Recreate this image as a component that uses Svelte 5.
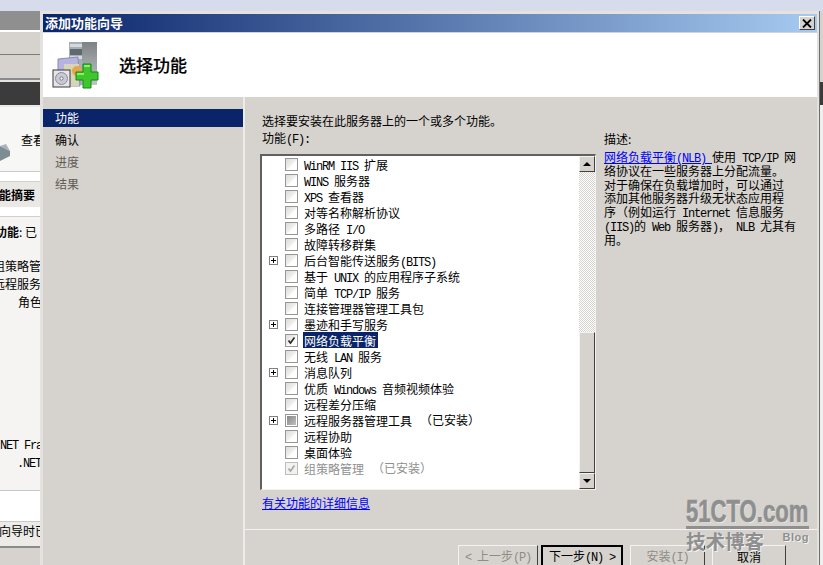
<script>
  const zh = '"Noto Sans CJK SC", sans-serif';
  const installed = '\uFF08已安装\uFF09';

  const features = [
    { label: 'WinRM IIS 扩展' },
    { label: 'WINS 服务器' },
    { label: 'XPS 查看器' },
    { label: '对等名称解析协议' },
    { label: '多路径 I/O' },
    { label: '故障转移群集' },
    { label: '后台智能传送服务(BITS)', expand: true },
    { label: '基于 UNIX 的应用程序子系统' },
    { label: '简单 TCP/IP 服务' },
    { label: '连接管理器管理工具包' },
    { label: '墨迹和手写服务', expand: true },
    { label: '网络负载平衡', state: 'checked', selected: true },
    { label: '无线 LAN 服务' },
    { label: '消息队列', expand: true },
    { label: '优质 Windows 音频视频体验' },
    { label: '远程差分压缩' },
    { label: '远程服务器管理工具', note: installed, expand: true, state: 'partial' },
    { label: '远程协助' },
    { label: '桌面体验' },
    { label: '组策略管理', note: installed, state: 'locked' }
  ];

  const steps = [
    { label: '功能', cls: 'active' },
    { label: '确认', cls: '' },
    { label: '进度', cls: 'dim' },
    { label: '结果', cls: 'dim' }
  ];

  const description = [
    '络协议在一些服务器上分配流量。',
    '对于确保在负载增加时\uFF0C可以通过',
    '添加其他服务器升级无状态应用程',
    '序\uFF08例如运行 Internet 信息服务',
    '(IIS)的 Web 服务器)\uFF0C NLB 尤其有',
    '用。'
  ];

  // latin runs are 6px wide in the original, cjk 12px
  function runs(text) {
    return text.split(/([\x20-\x7e]+)/).filter(Boolean).map((t) => ({
      t,
      latin: /^[\x20-\x7e]+$/.test(t)
    }));
  }
</script>

{#snippet mixed(text)}{#each runs(text) as r}{#if r.latin}<span class="latin">{r.t}</span>{:else}{r.t}{/if}{/each}{/snippet}

<div class="screen" style="--zh: {zh}">
  <div class="desktop-band"></div>
  <div class="row">
    <div class="behind">
      <div class="b-head"></div>
      <div class="b-tab"></div>
      <div class="b-tab second"></div>
      <div class="b-dark"></div>
      <div class="b-view">
        <svg class="b-icon" width="11" height="20" viewBox="0 0 11 20">
          <path d="M0 4 L10 9 L10 14 L0 19Z" fill="#7e8c94" />
          <path d="M0 4 L6 2 L10 9Z" fill="#a9b4ba" />
        </svg>
        <span class="b-look">查看</span>
      </div>
      <div class="b-white">
        <div class="b-pad"></div>
        <div class="b-title">能摘要</div>
        <div class="b-pad"></div>
        <div class="b-line bold"><b>功能</b>: 已</div>
        <div class="b-gap"></div>
        <div class="b-line far">组策略管</div>
        <div class="b-line far">远程服务</div>
        <div class="b-line indent">角色</div>
        <div class="b-spacer"></div>
        <div class="b-line mono"><span class="latin">NET Fra</span></div>
        <div class="b-line mono indent"><span class="latin">.NET</span></div>
      </div>
      <div class="b-blank"></div>
      <div class="b-foot">向导时已</div>
      <div class="b-end"></div>
    </div>

    <div class="dialog">
      <div class="titlebar">
        <span>添加功能向导</span>
        <button class="close" aria-label="关闭">
          <svg width="10" height="9" viewBox="0 0 10 9"><path d="M1 0.5 L9 8.5 M9 0.5 L1 8.5" stroke="#000" stroke-width="1.8" /></svg>
        </button>
      </div>
      <div class="banner">
        <svg class="logo" width="50" height="50" viewBox="0 0 50 50">
          <defs>
            <linearGradient id="tower" x1="0" x2="0" y1="0" y2="1">
              <stop offset="0" stop-color="#7d8385" />
              <stop offset="1" stop-color="#c2c5c4" />
            </linearGradient>
          </defs>
          <rect x="18" y="2" width="28" height="43" fill="url(#tower)" />
          <rect x="18" y="2" width="13" height="43" fill="#a8afb2" />
          <rect x="19" y="4" width="12" height="3" fill="#d5dadd" />
          <rect x="19" y="9" width="12" height="6" fill="#5f6a70" />
          <rect x="19" y="16" width="12" height="3" fill="#d5dadd" />
          <path d="M7 19 L27 17 L29 46 L7 46Z" fill="#b6b4de" stroke="#8c88b8" />
          <path d="M13 24 H28 V46 H13Z" fill="#d8d4b8" />
          <circle cx="26" cy="31" r="5" fill="#e4a64a" />
          <rect x="2" y="30" width="17" height="17" fill="#e6e6ea" stroke="#3b3b3b" />
          <circle cx="10.5" cy="38.5" r="6" fill="#c9c9d6" stroke="#8b8b9a" />
          <circle cx="10.5" cy="38.5" r="1.6" fill="#fff" stroke="#777" />
          <path d="M32 24 H40 V32 H47 V40 H40 V48 H32 V40 H25 V32 H32Z" fill="#3fc62c" stroke="#118a12" />
          <path d="M33 25 H39 V27 H33 Z M26 33 H33 V35 H26Z" fill="#8fee72" />
        </svg>
        <h1>选择功能</h1>
      </div>
      <div class="body">
        <nav class="steps">
          {#each steps as s}
            <div class="step {s.cls}">{s.label}</div>
          {/each}
        </nav>
        <main class="content">
          <div class="columns">
            <section class="left">
              <p class="intro">选择要安装在此服务器上的一个或多个功能。</p>
              <p class="field">{@render mixed('功能(F):')}</p>
              <div class="listbox">
                <ul>
                  {#each features as f}
                    <li class:locked={f.state === 'locked'}>
                      <span class="expander">
                        {#if f.expand}
                          <svg width="9" height="9" viewBox="0 0 9 9"><rect x="0.5" y="0.5" width="8" height="8" fill="#fff" stroke="#808080" /><path d="M2 4.5 H7 M4.5 2 V7" stroke="#000" /></svg>
                        {/if}
                      </span>
                      <span class="check {f.state || ''}">
                        {#if f.state === 'checked' || f.state === 'locked'}
                          <svg width="11" height="11" viewBox="0 0 11 11"><path d="M2.5 5.5 L4.5 8 L8.5 2.5" fill="none" stroke="currentColor" stroke-width="1.7" /></svg>
                        {/if}
                      </span>
                      <span class="label" class:selected={f.selected}>{@render mixed(f.label)}</span>
                      {#if f.note}<span class="note">{f.note}</span>{/if}
                    </li>
                  {/each}
                </ul>
                <div class="scrollbar">
                  <button class="arrow" aria-label="向上"><i class="up"></i></button>
                  <div class="track"><div class="thumb"></div></div>
                  <button class="arrow" aria-label="向下"><i class="down"></i></button>
                </div>
              </div>
              <a class="more" href="#more">有关功能的详细信息</a>
            </section>
            <aside class="desc">
              <p class="desc-head">描述:</p>
              <div class="desc-line"><a href="#nlb">{@render mixed('网络负载平衡(NLB) ')}</a>{@render mixed('使用 TCP/IP 网')}</div>
              {#each description as line}
                <div class="desc-line">{@render mixed(line)}</div>
              {/each}
            </aside>
          </div>
          <footer class="buttons">
            <button class="btn" disabled>{@render mixed('< 上一步(P)')}</button>
            <button class="btn primary">{@render mixed('下一步(N) >')}</button>
            <button class="btn install" disabled>{@render mixed('安装(I)')}</button>
            <button class="btn cancel">取消</button>
          </footer>
        </main>
      </div>
    </div>

    <div class="behind-right">
      <div class="r-a"></div>
      <div class="r-dark"></div>
      <div class="r-b"></div>
    </div>
  </div>

  <div class="watermark">
    <div class="wm-main">51CTO.com</div>
    <div class="wm-rule"></div>
    <div class="wm-sub"><span>技术博客</span><em>Blog</em></div>
  </div>
</div>

<style>
  :global(body) {
    margin: 0;
    background: #d6d3ce;
  }
  .screen {
    position: relative;
    width: 823px;
    height: 565px;
    overflow: hidden;
    display: flex;
    flex-direction: column;
    font: 12px/16px var(--zh);
    color: #000;
    background: #d6d3ce;
  }
  /* 12px courier squeezed to the 6px advance of the bitmap font */
  .latin {
    font-family: "Liberation Mono", monospace;
    font-size: 12px;
    letter-spacing: -1.2px;
    white-space: pre;
  }
  p { margin: 0; }

  .desktop-band {
    height: 11px;
    flex: none;
    background: #d7dcec;
  }
  .row {
    flex: 1;
    display: flex;
    min-height: 0;
  }

  /* window showing behind the wizard */
  .behind {
    width: 40px;
    flex: none;
    display: flex;
    flex-direction: column;
    overflow: hidden;
    white-space: nowrap;
    background: #e4e2de;
  }
  .b-head { height: 19px; flex: none; background: #8f8f8f; border-bottom: 2px solid #fff; }
  .b-tab { height: 22px; flex: none; background: #d6d3ce; border-bottom: 1px solid #7c7c7c; }
  .b-tab.second { height: 23px; border-bottom: 2px solid #8b8b8b; margin-bottom: 2px; }
  .b-dark { height: 23px; flex: none; background: #3b3b3b; border-bottom: 2px solid #e9e9e9; }
  .b-view {
    height: 64px;
    flex: none;
    display: flex;
    align-items: center;
    background: #f7f7f6;
    border-bottom: 1px solid #c8c8c8;
    position: relative;
  }
  .b-icon { position: absolute; left: 0; top: 35px; }
  .b-look { margin-left: 21px; margin-top: 2px; }
  .b-white {
    height: 319px;
    flex: none;
    background: #f5f4f2;
    border-bottom: 1px solid #c8c8c8;
    box-sizing: border-box;
  }
  .b-pad {
    height: 9px;
    background: #fff;
    border-bottom: 1px solid #d0d0d0;
  }
  .b-title {
    height: 25px;
    line-height: 25px;
    margin-left: -1px;
    font-weight: 700;
    background: #e9e8e5;
  }
  .b-line { height: 18px; line-height: 18px; }
  .b-line.bold { margin: 6px 0 0 -5px; }
  .b-line.bold b { font-weight: 700; }
  .b-gap { height: 16px; }
  .b-line.far { margin-left: -7px; }
  .b-line.indent { margin-left: 18px; }
  .b-line.mono { margin-left: 0; }
  .b-line.mono.indent { margin-left: 17px; }
  .b-spacer { height: 124px; }
  .b-blank { height: 30px; flex: none; background: #fff; border-bottom: 1px solid #c8c8c8; }
  .b-foot { height: 24px; flex: none; line-height: 18px; margin-left: -1px; background: #ecebe8; }
  .b-end { flex: 1; background: #d6d3ce; border-top: 2px solid #8b8b8b; }

  .behind-right {
    width: 3px;
    flex: none;
    display: flex;
    flex-direction: column;
    background: #d6d3ce;
    border-left: 1px solid #6e6e6e;
  }
  .r-a { height: 71px; }
  .r-dark { height: 23px; background: #3b3b3b; }
  .r-b { flex: 1; background: #efefef; }

  /* wizard */
  .dialog {
    flex: 1;
    min-width: 0;
    display: flex;
    flex-direction: column;
    box-sizing: border-box;
    border: solid #e4e2de;
    border-width: 3px 2px 0 3px;
    background: #d6d3ce;
  }
  .titlebar {
    height: 18px;
    flex: none;
    padding: 0 2px;
    display: flex;
    align-items: center;
    justify-content: space-between;
    color: #fff;
    font-size: 13px;
    font-weight: 700;
    background: linear-gradient(90deg, #0a246a, #a6caf0);
    border-bottom: 1px solid #d6d3ce;
  }
  .close {
    width: 16px;
    height: 14px;
    padding: 0;
    display: flex;
    align-items: center;
    justify-content: center;
    background: #d6d3ce;
    border: 1px solid;
    border-color: #fff #404040 #404040 #fff;
  }
  .banner {
    height: 64px;
    flex: none;
    display: flex;
    align-items: center;
    background: #fff;
  }
  .logo { margin: 0 0 0 8px; }
  .banner h1 {
    margin: 0 0 0 18px;
    font-size: 17px;
    line-height: 20px;
    font-weight: 500;
    -webkit-text-stroke: 0.2px #000;
  }

  .body {
    flex: 1;
    min-height: 0;
    display: flex;
  }
  .steps {
    width: 200px;
    flex: none;
    box-sizing: border-box;
    padding-top: 12px;
  }
  .step {
    height: 22px;
    line-height: 20px;
    padding-left: 12px;
    color: #000;
  }
  .step.active {
    height: 18px;
    margin-bottom: 3px;
    line-height: 18px;
    background: #0a246a;
    color: #fff;
  }
  .step.dim { color: #5f5c55; }

  .content {
    flex: 1;
    min-width: 0;
    display: flex;
    flex-direction: column;
    border-left: 2px solid #eeece8;
  }
  .columns {
    flex: 1;
    min-height: 0;
    display: flex;
    padding: 15px 0 0 15px;
    border-bottom: 1px solid #f4f3f1;
  }
  .left { width: 336px; flex: none; }
  .intro { height: 18px; line-height: 17px; margin-left: 2px; }
  .field { height: 16px; line-height: 15px; margin-left: 2px; }
  .listbox {
    box-sizing: border-box;
    height: 336px;
    margin-top: 8px;
    display: flex;
    background: #fff;
    border: solid;
    border-width: 2px 1px 1px 2px;
    border-color: #606060 #f2f1ef #f2f1ef #606060;
  }
  .listbox ul {
    flex: 1;
    margin: 0;
    padding: 0;
    list-style: none;
  }
  .listbox li {
    height: 16px;
    display: flex;
    align-items: center;
    white-space: nowrap;
  }
  .expander {
    width: 9px;
    height: 9px;
    margin-left: 7px;
    display: flex;
  }
  .check {
    box-sizing: border-box;
    width: 13px;
    height: 13px;
    margin-left: 7px;
    display: flex;
    align-items: center;
    justify-content: center;
    border: 1px solid #969696;
    color: #2c2c2c;
    background: linear-gradient(135deg, #dcdcd8, #eeeeeb 45%, #fff 60%);
  }
  .check.partial {
    background: linear-gradient(135deg, #7e7e7e, #c8c8c8);
    box-shadow: inset 0 0 0 1px #fff;
  }
  .check.locked {
    border-color: #bdbdbd;
    color: #a8a8a8;
    background: #f2f2f0;
  }
  .label {
    margin-left: 5px;
    padding: 0 1px;
    height: 16px;
    line-height: 18px;
  }
  .label.selected {
    background: #0a246a;
    color: #fff;
    padding: 0 2px 0 1px;
  }
  .note { margin-left: 7px; line-height: 18px; }
  li.locked { color: #8f8f8f; }

  .scrollbar {
    width: 16px;
    flex: none;
    display: flex;
    flex-direction: column;
  }
  .arrow {
    flex: none;
    width: 16px;
    height: 16px;
    padding: 0;
    display: flex;
    align-items: center;
    justify-content: center;
    background: #d6d3ce;
    border: 1px solid;
    border-color: #f4f3f1 #404040 #404040 #f4f3f1;
  }
  .arrow i {
    width: 0;
    height: 0;
    border: 4px solid transparent;
  }
  .arrow i.up { border-bottom-color: #000; border-top-width: 0; }
  .arrow i.down { border-top-color: #000; border-bottom-width: 0; }
  .track {
    flex: 1;
    display: flex;
    flex-direction: column;
    justify-content: flex-end;
    background: repeating-conic-gradient(#d6d3ce 0 25%, #fff 0 50%) 0 0 / 2px 2px;
  }
  .thumb {
    height: 141px;
    box-sizing: border-box;
    background: #d6d3ce;
    border: 1px solid;
    border-color: #f4f3f1 #404040 #404040 #f4f3f1;
  }
  .more {
    display: inline-block;
    margin: 5px 0 0 2px;
    color: #0000ff;
    text-decoration: underline;
  }

  .desc {
    flex: 1;
    min-width: 0;
    margin-left: 8px;
    padding-top: 19px;
    white-space: nowrap;
  }
  .desc-head { height: 19px; line-height: 16px; }
  .desc-line { height: 13.83px; line-height: 14px; }
  .desc a { color: #0000ff; text-decoration: underline; }

  .buttons {
    height: 35px;
    flex: none;
    box-sizing: border-box;
    padding: 15px 0 0 213px;
    display: flex;
  }
  .btn {
    box-sizing: border-box;
    height: 24px;
    padding: 0 0 1px;
    font: 12px/16px var(--zh);
    color: #000;
    background: #d6d3ce;
    border: 1px solid;
    border-color: #f4f3f1 #404040 #404040 #f4f3f1;
    width: 80px;
    margin-right: 3px;
    white-space: nowrap;
  }
  .btn:disabled { color: #8f8c85; }
  .btn.primary {
    width: 82px;
    border: 2px solid #000;
    margin-right: 7px;
  }
  .btn.install { width: 75px; margin-right: 7px; }
  .btn.cancel { width: 74px; margin-right: 0; }

  /* site watermark stamped on the screenshot */
  .watermark {
    position: absolute;
    left: 686px;
    top: 497px;
    width: 123px;
    color: #8f8f8f;
    pointer-events: none;
  }
  .wm-main {
    height: 29px;
    font: 700 32px/29px "Liberation Sans", sans-serif;
    -webkit-text-stroke: 0.7px #8f8f8f;
    text-shadow: 1px 1px 0 #f2f2f2;
    transform: scaleX(0.69);
    transform-origin: left center;
    white-space: nowrap;
  }
  .wm-rule { height: 3px; background: #8f8f8f; }
  .wm-sub {
    display: flex;
    justify-content: space-between;
    align-items: flex-start;
    margin-top: 1px;
  }
  .wm-sub span {
    font: 700 19.5px/22px var(--zh);
    text-shadow: 1px 1px 0 #f2f2f2;
  }
  .wm-sub em {
    font: 700 11px/14px "Liberation Sans", sans-serif;
    letter-spacing: 0.5px;
    text-shadow: 1px 1px 0 #f2f2f2;
  }
</style>
